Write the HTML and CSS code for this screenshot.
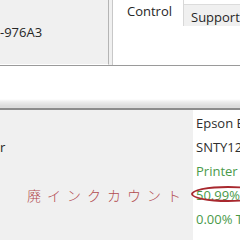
FILE: index.html
```html
<!DOCTYPE html>
<html>
<head>
<meta charset="utf-8">
<link rel="stylesheet" href="styles.css">
</head>
<body>
<div class="top">
  <div class="left-panel"><span class="id">-976A3</span></div>
  <div class="sep"></div>
  <div class="tabs">
    <div class="tab active">Control</div>
    <div class="tab">Support</div>
  </div>
</div>
<div class="gap"></div>
<div class="bottom">
  <div class="labels">
    <div class="row"></div>
    <div class="row">r</div>
    <div class="row"></div>
    <div class="row note">廃インクカウント</div>
    <div class="row"></div>
  </div>
  <div class="values">
    <div class="row dark">Epson E</div>
    <div class="row dark">SNTY12</div>
    <div class="row green">Printer</div>
    <div class="row green"><span class="circled">50.99%</span></div>
    <div class="row green">0.00% T</div>
  </div>
</div>
</body>
</html>
```
FILE: styles.css
```css
html, body {
  margin: 0;
  padding: 0;
  width: 240px;
  height: 240px;
  overflow: hidden;
  background: #ffffff;
  font-family: "Open Sans", "Noto Sans", sans-serif;
}
.top {
  display: flex;
  height: 66px;
  border-bottom: 1px solid #9a9a9a;
  box-sizing: border-box;
}
.left-panel {
  width: 109px;
  background: #f0f0f0;
  border-right: 1px solid #b4b4b4;
  border-bottom: 1px solid #ffffff;
  box-sizing: border-box;
  padding: 23px 0 0 0;
  font-size: 13px;
  color: #262626;
  line-height: 18px;
}
.sep {
  width: 3px;
  background: #f0f0f0;
  border-right: 1px solid #c8c8c8;
}
.tabs {
  flex: 1;
  display: flex;
  align-items: flex-start;
  background: #ffffff;
}
.tab {
  font-size: 13px;
  color: #262626;
  line-height: 18px;
}
.tab.active {
  width: 71px;
  height: 26px;
  padding: 2px 0 0 14px;
  box-sizing: border-box;
  border-right: 1px solid #d8d8d8;
}
.tab:not(.active) {
  margin-top: 4px;
  height: 22px;
  padding: 3px 0 0 7px;
  box-sizing: border-box;
  background: #f0f0f0;
  border-top: 1px solid #dcdcdc;
  flex: 1;
}
.gap {
  height: 42px;
  background: linear-gradient(#ffffff 0px, #ffffff 33px, #ececec 36px, #dcdcdc 40px);
  border-bottom: 2px solid #8c8c8c;
}
.bottom {
  display: flex;
  height: 132px;
  background: #f0f0f0;
}
.labels {
  flex: 0 0 193px;
  padding-top: 1px;
  font-size: 13px;
  color: #262626;
  white-space: nowrap;
}
.values {
  flex: 1 1 0;
  min-width: 0;
  background: #ffffff;
  padding: 1px 0 0 3px;
  font-size: 13px;
  white-space: nowrap;
}
.row {
  height: 24px;
  line-height: 24px;
}
.dark { color: #2e2e2e; }
.green { color: #4a9a4a; }
.note {
  padding-left: 27px;
  font-family: "Noto Sans CJK JP", sans-serif;
  font-weight: 300;
  font-size: 14px;
  color: #b24a4e;
  letter-spacing: 6px;
}
.circled {
  position: relative;
}
.circled::before {
  content: "";
  position: absolute;
  left: -5px;
  top: 0px;
  width: 70px;
  height: 12px;
  border: 2px solid #a8282e;
  border-radius: 50%;
}
```
